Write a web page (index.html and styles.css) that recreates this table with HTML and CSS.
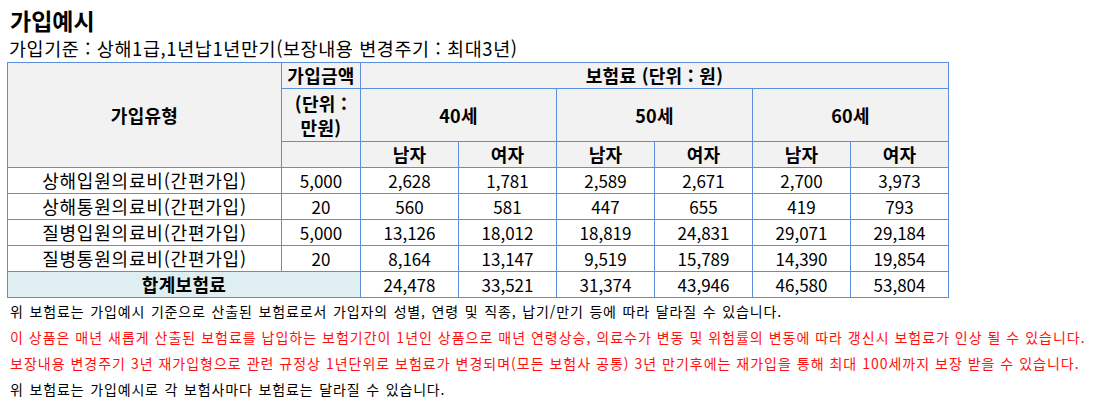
FILE: index.html
```html
<!DOCTYPE html>
<html lang="ko">
<head>
<meta charset="utf-8">
<link rel="stylesheet" href="styles.css">
</head>
<body>
<div class="page">
  <h1 class="title">가입예시</h1>
  <p class="subtitle">가입기준 : 상해1급,1년납1년만기(보장내용 변경주기 : 최대3년)</p>
  <table class="premium">
    <colgroup>
      <col class="c-type"><col class="c-amt">
      <col class="c-n"><col class="c-n"><col class="c-n"><col class="c-n"><col class="c-n"><col class="c-n">
    </colgroup>
    <thead>
      <tr class="h1">
        <th rowspan="3">가입유형</th>
        <th>가입금액</th>
        <th colspan="6">보험료 (단위 : 원)</th>
      </tr>
      <tr class="h2">
        <th class="unit">(단위 :<br>만원)</th>
        <th colspan="2">40세</th>
        <th colspan="2">50세</th>
        <th colspan="2">60세</th>
      </tr>
      <tr class="h3">
        <th></th>
        <th>남자</th><th>여자</th>
        <th>남자</th><th>여자</th>
        <th>남자</th><th>여자</th>
      </tr>
    </thead>
    <tbody>
      <tr><td class="name">상해입원의료비(간편가입)</td><td>5,000</td><td>2,628</td><td>1,781</td><td>2,589</td><td>2,671</td><td>2,700</td><td>3,973</td></tr>
      <tr><td class="name">상해통원의료비(간편가입)</td><td>20</td><td>560</td><td>581</td><td>447</td><td>655</td><td>419</td><td>793</td></tr>
      <tr><td class="name">질병입원의료비(간편가입)</td><td>5,000</td><td>13,126</td><td>18,012</td><td>18,819</td><td>24,831</td><td>29,071</td><td>29,184</td></tr>
      <tr><td class="name">질병통원의료비(간편가입)</td><td>20</td><td>8,164</td><td>13,147</td><td>9,519</td><td>15,789</td><td>14,390</td><td>19,854</td></tr>
      <tr class="total"><th colspan="2">합계보험료</th><td>24,478</td><td>33,521</td><td>31,374</td><td>43,946</td><td>46,580</td><td>53,804</td></tr>
    </tbody>
  </table>
  <ul class="notes">
    <li class="note">위 보험료는 가입예시 기준으로 산출된 보험료로서 가입자의 성별, 연령 및 직종, 납기/만기 등에 따라 달라질 수 있습니다.</li>
    <li class="note warn">이 상품은 매년 새롭게 산출된 보험료를 납입하는 보험기간이 1년인 상품으로 매년 연령상승, 의료수가 변동 및 위험률의 변동에 따라 갱신시 보험료가 인상 될 수 있습니다.</li>
    <li class="note warn">보장내용 변경주기 3년 재가입형으로 관련 규정상 1년단위로 보험료가 변경되며(모든 보험사 공통) 3년 만기후에는 재가입을 통해 최대 100세까지 보장 받을 수 있습니다.</li>
    <li class="note">위 보험료는 가입예시로 각 보험사마다 보험료는 달라질 수 있습니다.</li>
  </ul>
</div>
</body>
</html>
```

FILE: styles.css
```css
html, body {
  margin: 0;
  padding: 0;
  background: #fff;
}
body {
  font-family: "Noto Sans CJK KR", "Noto Sans", sans-serif;
  color: #000;
}
.page {
  padding: 5px 0 0 8px;
}
.title {
  margin: 0;
  font-size: 23px;
  line-height: 30px;
  font-weight: 700;
  padding-left: 2px;
}
.subtitle {
  margin: 0 0 1px 0;
  font-size: 18.5px;
  line-height: 26px;
  letter-spacing: 0.6px;
  padding-left: 1px;
}
.premium {
  margin-left: -1px;
  border-collapse: collapse;
  table-layout: fixed;
  width: 941px;
  font-size: 17px;
}
.c-type { width: 274px; }
.c-amt { width: 79px; }
.c-n { width: 98px; }
.premium th, .premium td {
  border: 1px solid #5b8fdc;
  padding: 0;
  text-align: center;
  vertical-align: middle;
  line-height: 25px;
  white-space: nowrap;
}
.premium thead th {
  background: #f2f2f2;
  font-weight: 700;
  font-size: 18px;
  letter-spacing: 0.3px;
}
.premium .h2 th {
  line-height: 52px;
}
.premium .h2 th.unit {
  line-height: 24px;
  padding: 2px 0;
}
.premium td {
  font-size: 17px;
}
.premium td.name {
  font-size: 18px;
  letter-spacing: 0.8px;
}
.premium .total th {
  background: #dfeef0;
  font-weight: 700;
  font-size: 18px;
  letter-spacing: 0.3px;
}
.notes {
  list-style: none;
  margin: 0;
  padding: 0 0 0 2px;
}
.note {
  font-size: 14px;
  line-height: 26px;
  letter-spacing: 0.85px;
  word-spacing: 1px;
  white-space: nowrap;
}
.note.warn {
  color: #ff1010;
  letter-spacing: 1px;
  word-spacing: 0;
}
```
